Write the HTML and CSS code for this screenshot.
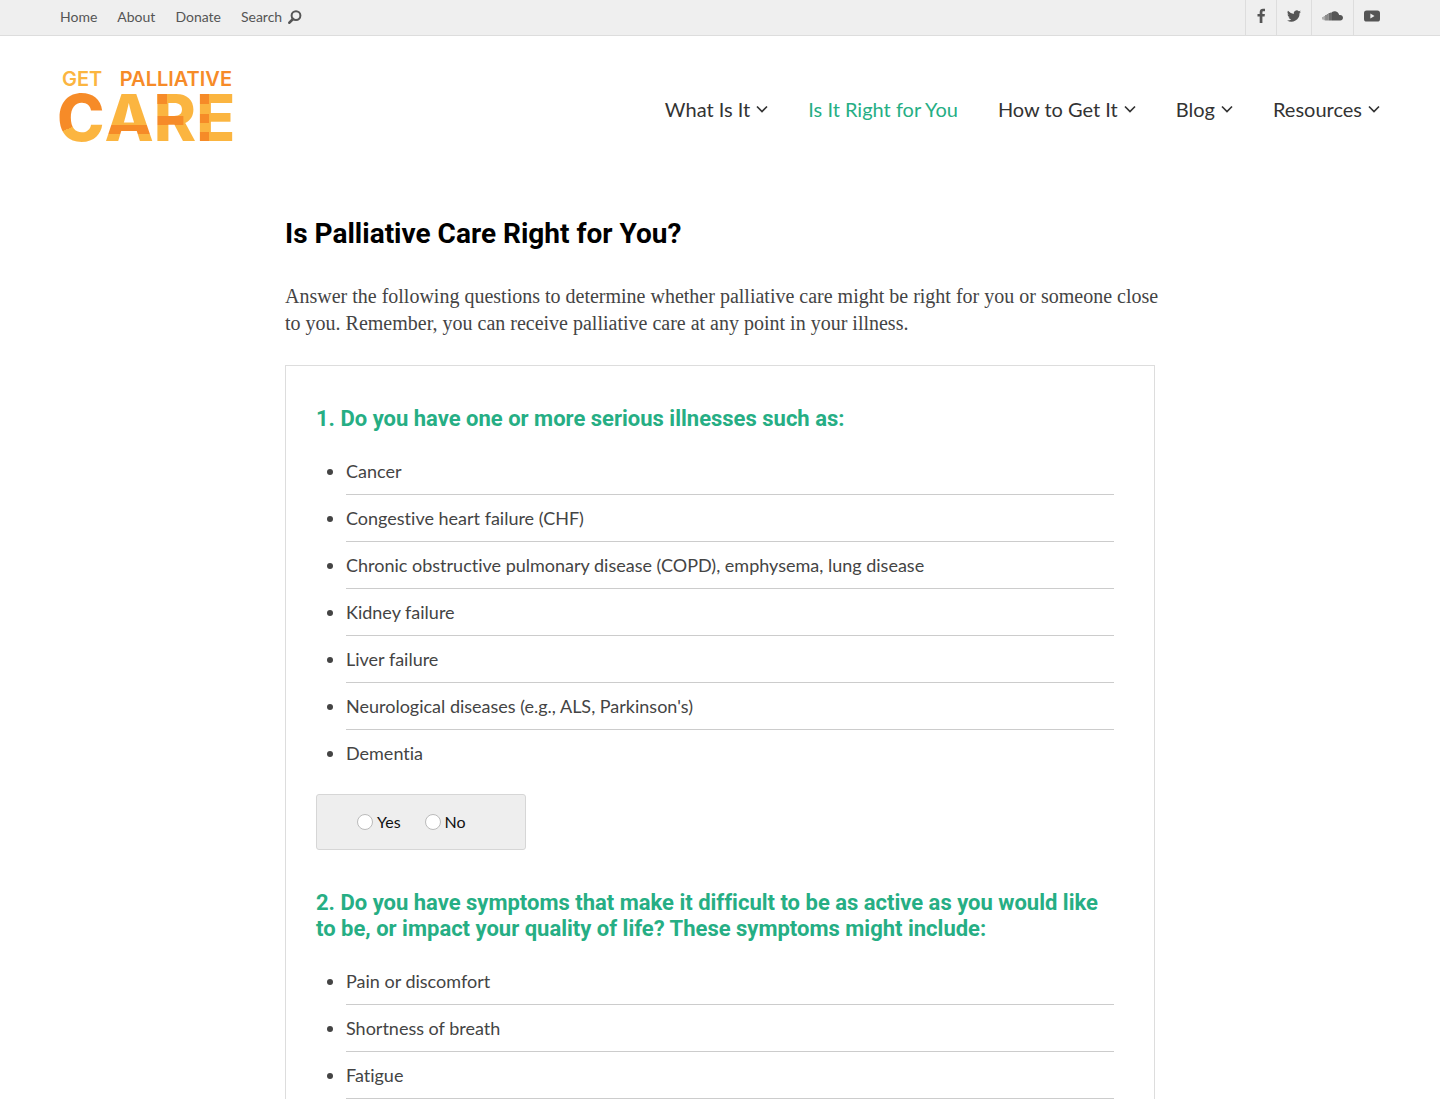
FILE: index.html
```html
<!DOCTYPE html>
<html lang="en">
<head>
  <meta charset="UTF-8" />
  <meta name="viewport" content="width=device-width, initial-scale=1.0" />
  <title>Is Palliative Care Right for You? | Get Palliative Care</title>
  <link rel="stylesheet" href="styles.css">
</head>
<body>
  <div class="topbar">
    <nav class="topbar-links">
      <a href="#">Home</a>
      <a href="#">About</a>
      <a href="#">Donate</a>
      <a href="#" class="search-link">Search
        <svg width="14" height="14" viewBox="0 0 14 14"><circle cx="8" cy="5.6" r="4.4" fill="none" stroke="currentColor" stroke-width="2"/><path d="M5 9 1.4 12.7" stroke="currentColor" stroke-width="2.6" stroke-linecap="round"/></svg>
      </a>
    </nav>
    <div class="social">
      <a href="#" aria-label="Facebook"><svg width="10" height="16" viewBox="0 0 10 16"><path d="M9 .8v2.5H7.6c-1 0-1.2.5-1.2 1.2V6h2.500l-.3 2.600H6.400V15H3.700V8.600H1.500V6h2.200V4.100C3.700 1.900 5 .7 7 .7c.9 0 1.700.1 2 .1z" fill="currentColor"/></svg></a>
      <a href="#" aria-label="Twitter"><svg width="14" height="16" viewBox="0 0 24 24"><path d="M24 4.600a10 10 0 0 1-2.800.8 5 5 0 0 0 2.100-2.700 10 10 0 0 1-3.100 1.200 4.900 4.900 0 0 0-8.400 4.500A14 14 0 0 1 1.700 3.200a4.900 4.900 0 0 0 1.500 6.500 5 5 0 0 1-2.200-.6 4.900 4.900 0 0 0 3.900 4.900 5 5 0 0 1-2.200.1 4.900 4.900 0 0 0 4.600 3.400A10 10 0 0 1 0 19.500a14 14 0 0 0 21.500-12.400A10 10 0 0 0 24 4.600z" fill="currentColor"/></svg></a>
      <a href="#" aria-label="SoundCloud"><svg width="21" height="16" viewBox="0 0 21 16">
        <path d="M10 4C11 3.300 12.300 3 13.300 3.200c2 .3 3.500 1.700 3.900 3.900 2-.5 3.800.7 3.800 2.700 0 1.500-1.200 2.700-2.700 2.700H10z" fill="currentColor"/>
        <path d="M9.200 4.600v7.900M7.400 5v7.500" stroke="currentColor" stroke-width="1.800" opacity=".85"/>
        <path d="M5.600 6v6.500M3.900 7v5.500" stroke="currentColor" stroke-width="1.700" opacity=".65"/>
        <path d="M2.300 8v4.200M.8 9v2.500" stroke="currentColor" stroke-width="1.400" opacity=".45"/>
      </svg></a>
      <a href="#" aria-label="YouTube"><svg width="16" height="16" viewBox="0 0 16 16"><rect y="2.500" width="16" height="11" rx="2.600" fill="currentColor"/><path d="M6.400 5.600v4.800L10.500 8z" fill="#efefef"/></svg></a>
    </div>
  </div>

  <header>
    <a href="#" class="logo">
      <span class="logo-top"><span class="yellow">GET</span><span>PALLIATIVE</span></span>
      <span class="logo-care"><span class="c">C</span><span class="a">A</span><span class="r">R</span><span class="e">E</span></span>
    </a>
    <nav class="main-nav">
      <a href="#">What Is It <svg width="12" height="8" viewBox="0 0 12 8"><path d="M1 1.500 6 6.500 11 1.500"/></svg></a>
      <a href="#" class="active">Is It Right for You</a>
      <a href="#">How to Get It <svg width="12" height="8" viewBox="0 0 12 8"><path d="M1 1.500 6 6.500 11 1.500"/></svg></a>
      <a href="#">Blog <svg width="12" height="8" viewBox="0 0 12 8"><path d="M1 1.500 6 6.500 11 1.500"/></svg></a>
      <a href="#">Resources <svg width="12" height="8" viewBox="0 0 12 8"><path d="M1 1.500 6 6.500 11 1.500"/></svg></a>
    </nav>
  </header>

  <main>
    <h1>Is Palliative Care Right for You?</h1>
    <p class="intro">Answer the following questions to determine whether palliative care might be right for you or someone close to you. Remember, you can receive palliative care at any point in your illness.</p>

    <form class="quiz">
      <section>
        <h2 id="q1">1. Do you have one or more serious illnesses such as:</h2>
        <ul class="illnesses">
          <li>Cancer</li>
          <li>Congestive heart failure (CHF)</li>
          <li>Chronic obstructive pulmonary disease (COPD), emphysema, lung disease</li>
          <li>Kidney failure</li>
          <li>Liver failure</li>
          <li>Neurological diseases (e.g., ALS, Parkinson's)</li>
          <li>Dementia</li>
        </ul>
        <div class="answer" role="radiogroup" aria-labelledby="q1">
          <label><input type="radio" name="q1" value="yes" />Yes</label>
          <label><input type="radio" name="q1" value="no" />No</label>
        </div>
      </section>

      <section>
        <h2>2. Do you have symptoms that make it difficult to be as active as you would like to be, or impact your quality of life? These symptoms might include:</h2>
        <ul>
          <li>Pain or discomfort</li>
          <li>Shortness of breath</li>
          <li>Fatigue</li>
        </ul>
      </section>
    </form>
  </main>
</body>
</html>
```
FILE: styles.css
```css
* {
  box-sizing: border-box;
  margin: 0;
  padding: 0;
}

body {
  font-family: Lato, sans-serif;
  font-size: 18px;
  font-variant-ligatures: none;
  color: #444;
  background: #fff;
}

a {
  color: inherit;
  text-decoration: none;
}

svg {
  display: block;
}

/* top bar */
.topbar {
  display: flex;
  justify-content: space-between;
  height: 36px;
  padding: 0 60px;
  background: #efefef;
  border-bottom: 1px solid #ddd;
  color: #555;
  font-size: 14px;
}

.topbar-links {
  display: flex;
  align-items: center;
  gap: 20px;
  padding-bottom: 2px;
}

.search-link {
  display: flex;
  align-items: center;
  gap: 6px;
}

.social {
  display: flex;
}

.social a {
  display: flex;
  align-items: center;
  padding: 0 10px 3px;
  border-left: 1px solid #ddd;
}

.social a:last-child {
  padding-right: 0;
}

/* header */
header {
  display: flex;
  justify-content: space-between;
  align-items: center;
  padding: 35px 60px 0;
}

.logo {
  width: 172px;
}

.logo-top {
  display: flex;
  justify-content: space-between;
  margin-bottom: 3px;
  padding-left: 2px;
  font: 600 20px/16px Inter, sans-serif;
  color: #f68b28;
}

.logo-top .yellow {
  color: #fbb540;
}

.logo-care {
  display: flex;
  justify-content: space-between;
  margin: 0 -3px;
  font-family: Inter, sans-serif;
  font-size: 64px;
  font-weight: 800;
  line-height: 56px;
}

.logo-care span {
  color: transparent;
  background-color: #fbb540;
  background-repeat: no-repeat;
  -webkit-background-clip: text;
  background-clip: text;
}

.logo-care .c {
  background-image: linear-gradient(155deg, #f68b28 56%, transparent 56%);
}

.logo-care .a {
  background-image: linear-gradient(#f68b28, #f68b28);
  background-size: 100% 9px;
  background-position: 0 35px;
}

.logo-care .r {
  background-image: linear-gradient(#f68b28, #f68b28), linear-gradient(#f68b28, #f68b28);
  background-size: 13px 14px, 70% 9px;
  background-position: 0 0, 0 26px;
}

.logo-care .e {
  background-image: linear-gradient(#f68b28 14px, transparent 14px 24px, #f68b28 24px 33px, transparent 33px 42px, #f68b28 42px);
  background-size: 13px 100%;
}

.main-nav {
  display: flex;
  gap: 40px;
  color: #333;
  font-size: 20px;
  line-height: 24px;
}

.main-nav a {
  display: flex;
  align-items: center;
  gap: 6px;
}

.main-nav .active {
  color: #26ae84;
}

.main-nav path {
  fill: none;
  stroke: currentColor;
  stroke-width: 1.7;
}

/* content */
main {
  max-width: 870px;
  margin: 71px auto 0;
}

h1, h2 {
  font-family: Roboto, sans-serif;
  font-weight: 700;
}

h1 {
  margin-bottom: 32px;
  font-size: 28px;
  line-height: 34px;
  color: #000;
}

.intro {
  margin: 0 -10px 28px 0;
  font-family: "Liberation Serif", serif;
  font-size: 20px;
  line-height: 27px;
}

.quiz {
  padding: 40px 40px 0 30px;
  border: 1px solid #ddd;
  border-bottom: 0;
}

h2 {
  margin-bottom: 16px;
  font-size: 22px;
  line-height: 26px;
  color: #26ae84;
}

ul {
  padding-left: 30px;
}

li {
  padding: 10px 0;
  line-height: 26px;
  border-bottom: 1px solid #ccc;
}

.illnesses li:last-child {
  border-bottom: 0;
}

.answer {
  display: flex;
  gap: 24px;
  width: 210px;
  height: 56px;
  margin: 18px 0 40px;
  padding: 0 0 2px 40px;
  background: #eee;
  border: 1px solid #d6d6d6;
  border-radius: 3px;
  color: #111;
  font-size: 16px;
}

.answer label {
  display: flex;
  align-items: center;
  gap: 4px;
}

.answer input {
  appearance: none;
  width: 16px;
  height: 16px;
  margin-top: 2px;
  border: 1px solid #bbb;
  border-radius: 50%;
  background: #fff;
}

.answer input:checked {
  background: #26ae84;
}
```
